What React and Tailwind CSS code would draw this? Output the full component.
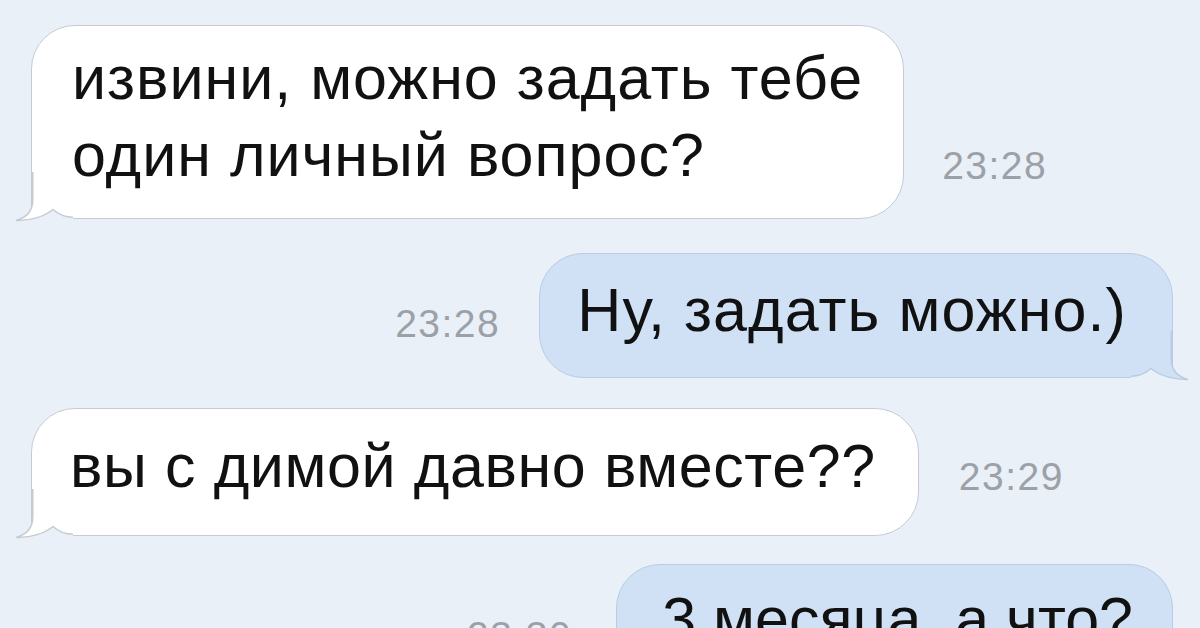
const PAGE_BG = "#eaf0f7";

function Tail({ mine }) {
  // bubble tail drawn over the squared-off bottom corner
  const fill = mine ? "#d0e1f5" : "#ffffff";
  const stroke = mine ? "#b9cce2" : "#c6cbd2";
  return (
    <svg
      className={mine ? "absolute bottom-[-4px] right-[-19px] h-[50px] w-[60px]" : "absolute bottom-[-4px] left-[-19px] h-[50px] w-[60px]"}
      viewBox="0 0 60 50"
    >
      <g transform={mine ? "translate(60 0) scale(-1 1)" : undefined}>
        <path d="M3 48.5 C18 49 32 44 40 37.5 C45 42 50 45.25 60 45.25 L60 50 L0 50 Z" fill={PAGE_BG} />
        <path d="M19.75 0 L19.75 28 C19.75 40 12 46 3 48.5 C18 49 32 44 40 37.5 C45 42 50 45.25 60 45.25 L60 0 Z" fill={fill} />
        <path d="M19.75 0 L19.75 28 C19.75 40 12 46 3 48.5 C18 49 32 44 40 37.5 C45 42 50 45.25 60 45.25" fill="none" stroke={stroke} strokeWidth="1.5" />
      </g>
    </svg>
  );
}

function Bubble({ mine, pad, children }) {
  return (
    <div
      className={
        mine
          ? "relative shrink-0 rounded-[44px] rounded-br-none border-[1.5px] border-[#b9cce2] bg-[#d0e1f5]"
          : "relative shrink-0 rounded-[44px] rounded-bl-none border-[1.5px] border-[#c6cbd2] bg-white"
      }
    >
      <Tail mine={mine} />
      <div className={`relative whitespace-nowrap text-[61px] leading-[77px] text-[#111111] ${pad}`}>{children}</div>
    </div>
  );
}

function Time({ children, className }) {
  return <span className={`shrink-0 text-[39px] leading-none tracking-[1.5px] text-[#9ca1a8] ${className}`}>{children}</span>;
}

export default function App() {
  return (
    <div className="flex h-[628px] w-[1200px] flex-col overflow-hidden bg-[#eaf0f7] pt-[25px] font-['Liberation_Sans',Arial,sans-serif]">
      <div className="flex items-end gap-[38px] pl-[31px]">
        <Bubble pad="pl-[40px] pr-[40px] pt-[14px] pb-[24px] tracking-[1px]">
          извини, можно задать тебе
          <br />
          один личный вопрос?
        </Bubble>
        <Time className="mb-[34px]">23:28</Time>
      </div>

      <div className="mt-[34px] flex items-end justify-end gap-[39px] pr-[27px]">
        <Time className="mb-[35px]">23:28</Time>
        <Bubble mine pad="pl-[37px] pr-[45px] pt-[18px] pb-[28px] tracking-[1.1px]">Ну, задать можно.)</Bubble>
      </div>

      <div className="mt-[30px] flex items-end gap-[40px] pl-[31px]">
        <Bubble pad="pl-[38px] pr-[42px] pt-[19px] pb-[30px] tracking-[0.6px]">вы с димой давно вместе??</Bubble>
        <Time className="mb-[40px]">23:29</Time>
      </div>

      <div className="mt-[28px] flex items-start justify-end gap-[44px] pr-[27px]">
        <Time className="mt-[52px]">23:30</Time>
        <Bubble mine pad="pl-[45px] pr-[39px] pt-[16px] pb-[26px]">3 месяца, а что?</Bubble>
      </div>
    </div>
  );
}
